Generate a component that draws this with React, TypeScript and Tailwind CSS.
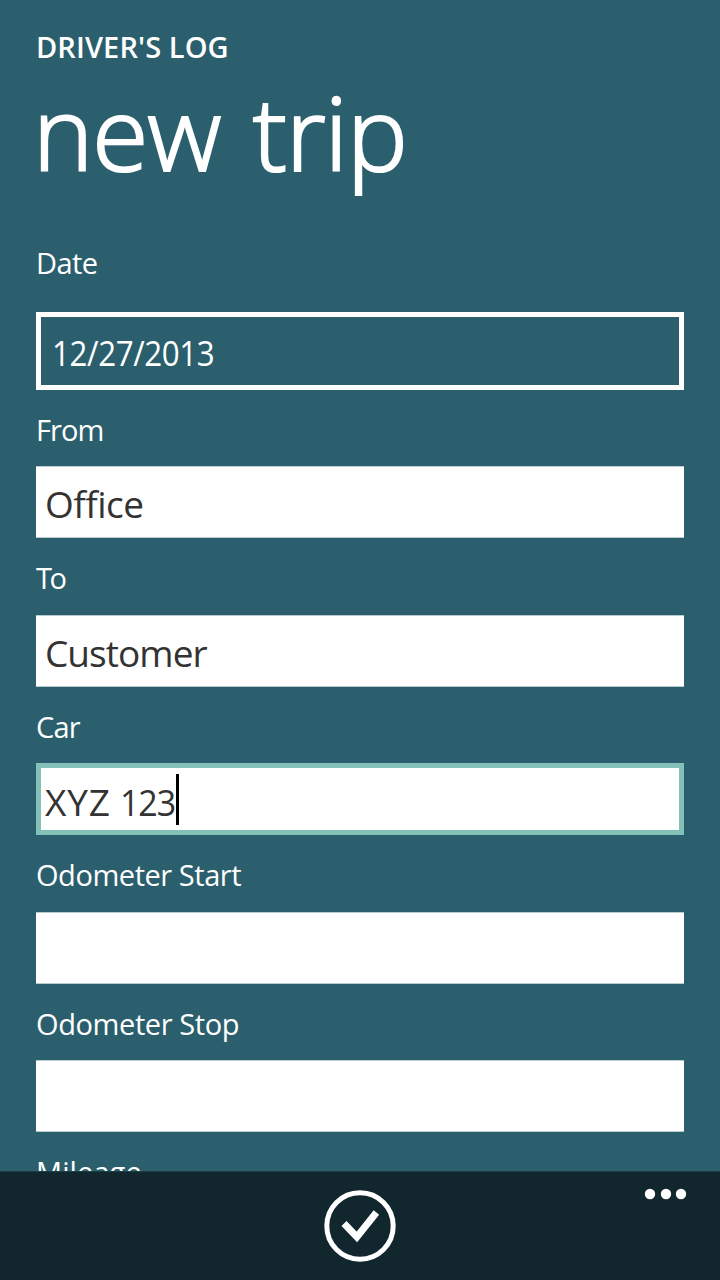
import type { ReactNode } from "react";

const labelClass = "h-10 text-[29px] leading-10 whitespace-nowrap text-white";

function Field({ label, tracking, children }: { label: string; tracking: string; children?: ReactNode }) {
  return (
    <div className="flex h-[148.5px] flex-col pt-[20px]">
      <label className={`${labelClass} ${tracking}`}>{label}</label>
      <div className="mt-[16.5px] flex h-[72px]">{children}</div>
    </div>
  );
}

function Box({ children }: { children?: ReactNode }) {
  return (
    <div className="w-full border-y border-[#b9cbd0] bg-white pl-[9px] text-[37px] leading-[74.4px] whitespace-nowrap text-[#333]">
      {children}
    </div>
  );
}

export default function App() {
  return (
    <div className="flex h-[1280px] w-[720px] flex-col overflow-hidden bg-[#2b5f6d] font-['Open_Sans','Noto_Sans',sans-serif]">
      <main className="h-[1171px] overflow-hidden px-9 pt-[27px]">
        <div className="h-10 text-[29px] leading-10 font-semibold tracking-[0.1px] text-white">DRIVER'S LOG</div>
        <h1 className="mt-[13px] -ml-[3px] h-[104px] text-[102px] leading-[104px] font-light tracking-[-0.9px] whitespace-nowrap text-white [-webkit-text-stroke:2.2px_white] [word-spacing:7px]">new trip</h1>
        <div className="mt-[59px]">
          <div className={`${labelClass} tracking-[-0.6px]`}>Date</div>
          <div className="mt-[28.9px] h-[78px] border-[5px] border-white pl-[11px] text-[34px] leading-[73px] text-white">
            <span className="inline-block origin-left scale-x-[0.92] tracking-[-0.4px]">12/27/2013</span>
          </div>
        </div>
        <Field label="From" tracking="tracking-[-0.9px]">
          <Box><span className="tracking-[-0.5px]">Office</span></Box>
        </Field>
        <Field label="To" tracking="tracking-[-2.5px]">
          <Box><span className="tracking-[-0.95px]">Customer</span></Box>
        </Field>
        <Field label="Car" tracking="tracking-[-0.8px]">
          <div className="flex w-full items-start border-[5px] border-[#83c0b7] bg-white pl-1 text-[37px] leading-[67px] text-[#333]">
            <span className="w-[75px] tracking-[0.8px]">XYZ </span>
            <span className="w-[56px] origin-left scale-x-[0.92] tracking-[-1.2px]">123</span>
            <span className="mt-[6px] h-[51px] w-[3px] bg-black" />
          </div>
        </Field>
        <Field label="Odometer Start" tracking="tracking-[-0.45px]"><Box /></Field>
        <Field label="Odometer Stop" tracking="tracking-[-0.4px]"><Box /></Field>
        <Field label="Mileage" tracking="tracking-[0.1px]"><Box /></Field>
      </main>
      <footer className="relative flex h-[109px] justify-center border-t border-[#1c3e48] bg-[#12262d] pt-[18px]">
        <svg className="h-[72px] w-[72px]" viewBox="0 0 72 72" fill="none" stroke="white">
          <circle cx="36" cy="36" r="33.2" strokeWidth="5" />
          <path d="M20 33.5 32.9 47 52.4 22.5" strokeWidth="7" />
        </svg>
        <svg className="absolute top-[16px] right-[33px] h-3 w-[43px]" viewBox="0 0 43 12" fill="white">
          <circle cx="6" cy="6" r="5.2" />
          <circle cx="22" cy="6" r="5.2" />
          <circle cx="37" cy="6" r="5.2" />
        </svg>
      </footer>
    </div>
  );
}
